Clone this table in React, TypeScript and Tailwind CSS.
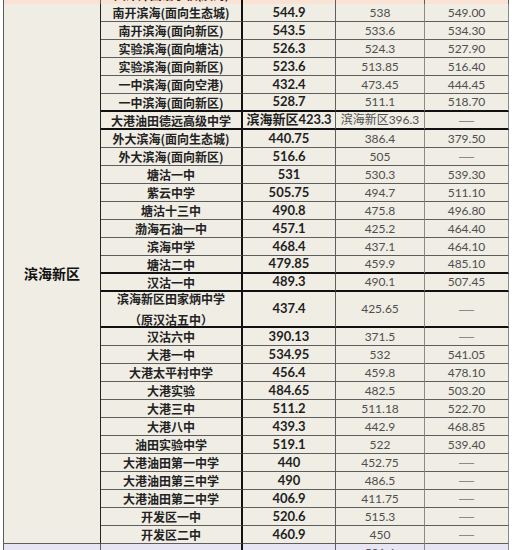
import React from "react";

type Row = {
  name: string;
  name2?: string;
  a: string;
  b: string;
  c: string;
  thick?: boolean;
};

const rows: Row[] = [
  { name: "南开滨海(面向生态城)", a: "544.9", b: "538", c: "549.00" },
  { name: "南开滨海(面向新区)", a: "543.5", b: "533.6", c: "534.30" },
  { name: "实验滨海(面向塘沽)", a: "526.3", b: "524.3", c: "527.90" },
  { name: "实验滨海(面向新区)", a: "523.6", b: "513.85", c: "516.40" },
  { name: "一中滨海(面向空港)", a: "432.4", b: "473.45", c: "444.45" },
  { name: "一中滨海(面向新区)", a: "528.7", b: "511.1", c: "518.70", thick: true },
  { name: "大港油田德远高级中学", a: "滨海新区423.3", b: "滨海新区396.3", c: "—", thick: true },
  { name: "外大滨海(面向生态城)", a: "440.75", b: "386.4", c: "379.50" },
  { name: "外大滨海(面向新区)", a: "516.6", b: "505", c: "—" },
  { name: "塘沽一中", a: "531", b: "530.3", c: "539.30" },
  { name: "紫云中学", a: "505.75", b: "494.7", c: "511.10" },
  { name: "塘沽十三中", a: "490.8", b: "475.8", c: "496.80" },
  { name: "渤海石油一中", a: "457.1", b: "425.2", c: "464.40" },
  { name: "滨海中学", a: "468.4", b: "437.1", c: "464.10" },
  { name: "塘沽二中", a: "479.85", b: "459.9", c: "485.10", thick: true },
  { name: "汉沽一中", a: "489.3", b: "490.1", c: "507.45", thick: true },
  { name: "滨海新区田家炳中学", name2: "（原汉沽五中）", a: "437.4", b: "425.65", c: "—", thick: true },
  { name: "汉沽六中", a: "390.13", b: "371.5", c: "—" },
  { name: "大港一中", a: "534.95", b: "532", c: "541.05" },
  { name: "大港太平村中学", a: "456.4", b: "459.8", c: "478.10" },
  { name: "大港实验", a: "484.65", b: "482.5", c: "503.20" },
  { name: "大港三中", a: "511.2", b: "511.18", c: "522.70" },
  { name: "大港八中", a: "439.3", b: "442.9", c: "468.85" },
  { name: "油田实验中学", a: "519.1", b: "522", c: "539.40" },
  { name: "大港油田第一中学", a: "440", b: "452.75", c: "—" },
  { name: "大港油田第三中学", a: "490", b: "486.5", c: "—" },
  { name: "大港油田第二中学", a: "406.9", b: "411.75", c: "—" },
  { name: "开发区一中", a: "520.6", b: "515.3", c: "—" },
  { name: "开发区二中", a: "460.9", b: "450", c: "—" },
];

const cols = "grid grid-cols-[98px_142px_93px_89px_84px]";
const base = "flex items-center justify-center border-b border-r border-[#5e5e5e]";

export default function App() {
  return (
    <div className="h-[550px] w-[512px] overflow-hidden bg-white font-['Lato','Noto_Sans_CJK_SC',sans-serif]">
      <div className="ml-[3px] -mt-[14px] flex w-[506px] flex-col">
        {/* previous section, mostly cut off */}
        <div className={`${cols} h-[18px] bg-[#fae3d5]`}>
          <div className={`${base} border-l border-b-[#222]`} />
          <div className={`${base} border-r-2 border-r-[#111] border-b-[#222] text-[12px] font-bold text-[#222]`}>
            天津外国语学校(滨海)
          </div>
          <div className={`${base} border-b-[#222] text-[13px] font-bold text-[#222]`}>535.85</div>
          <div className={`${base} border-b-[#222] text-[12px] text-[#555]`}>520.35</div>
          <div className={`${base} border-b-[#222] text-[12px] text-[#555]`}>530.10</div>
        </div>

        <div className={`${cols} bg-[#f0ede5]`}>
          <div className={`${base} col-start-1 row-span-29 border-l border-r-[#222] text-[14px] font-bold text-[#111]`}>
            <span className="font-['Noto_Sans_CJK_SC',sans-serif]">滨海新区</span>
          </div>
          {rows.map((r, i) => {
            const h = r.name2 ? "h-[36px]" : "h-[18px]";
            const b = r.thick ? "border-b-2 border-b-[#111]" : "";
            const dash =
              r.c === "—" ? "font-['Liberation_Sans',sans-serif] text-[15px] text-[#8a8a8a]" : "text-[12px] text-[#4f4f4f]";
            return (
              <React.Fragment key={i}>
                <div
                  className={`${base} ${h} ${b} flex-col border-r-2 border-r-[#111] font-['Noto_Sans_CJK_SC',sans-serif] text-[12px] font-bold leading-[21px] text-[#222]`}
                >
                  <span>{r.name}</span>
                  {r.name2 && <span>{r.name2}</span>}
                </div>
                <div className={`${base} ${h} ${b} text-[13px] font-bold text-[#1f1f1f]`}>{r.a}</div>
                <div className={`${base} ${h} ${b} border-r-[#8a8a8a] text-[12px] text-[#4f4f4f]`}>{r.b}</div>
                <div className={`${base} ${h} ${b} border-r-[#8a8a8a] ${dash}`}>{r.c}</div>
              </React.Fragment>
            );
          })}
        </div>

        {/* next section, top edge only */}
        <div className={`${cols} h-[18px] bg-[#e7e5f3]`}>
          <div className={`${base} border-l`} />
          <div className={`${base} border-r-2 border-r-[#111]`} />
          <div className={`${base}`} />
          <div className={`${base} border-r-[#8a8a8a] text-[12px] text-[#555]`}>531.6</div>
          <div className={`${base} border-r-[#8a8a8a]`} />
        </div>
      </div>
    </div>
  );
}
